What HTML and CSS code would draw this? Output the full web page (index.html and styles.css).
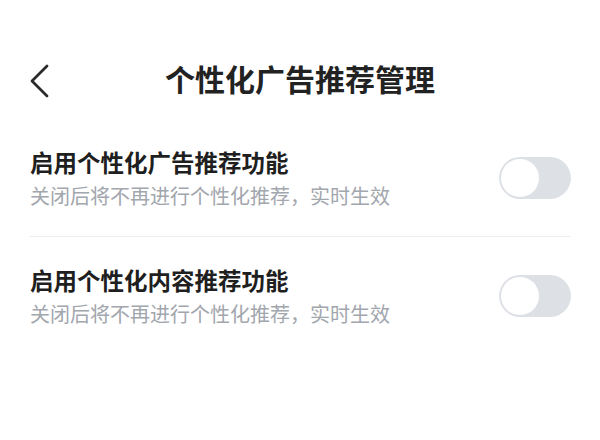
FILE: index.html
```html
<!DOCTYPE html>
<html lang="zh-CN">
<head>
<meta charset="utf-8">
<title>个性化广告推荐管理</title>
<link rel="stylesheet" href="styles.css">
</head>
<body>
<div class="page">
  <header class="nav">
    <button class="back" aria-label="返回">
      <svg width="24" height="34" viewBox="0 0 24 34" fill="none">
        <polyline points="19,2 4,17 19,32" stroke="#2b2b2b" stroke-width="2.8" stroke-linecap="round" stroke-linejoin="round"/>
      </svg>
    </button>
    <h1 class="nav-title">个性化广告推荐管理</h1>
    <span class="nav-spacer"></span>
  </header>
  <ul class="list">
    <li class="row">
      <div class="text">
        <div class="row-title">启用个性化广告推荐功能</div>
        <div class="row-desc">关闭后将不再进行个性化推荐，实时生效</div>
      </div>
      <span class="switch"><span class="knob"></span></span>
    </li>
    <li class="divider"></li>
    <li class="row">
      <div class="text">
        <div class="row-title">启用个性化内容推荐功能</div>
        <div class="row-desc">关闭后将不再进行个性化推荐，实时生效</div>
      </div>
      <span class="switch"><span class="knob"></span></span>
    </li>
  </ul>
</div>
</body>
</html>
```
FILE: styles.css
```css
html, body {
  margin: 0;
  padding: 0;
  background: #ffffff;
}
body {
  font-family: "Noto Sans CJK SC", "Noto Sans", sans-serif;
  color: #1f1f1f;
}
.page {
  width: 600px;
  height: 440px;
  padding-top: 60px;
  box-sizing: border-box;
  overflow: hidden;
}
.nav {
  display: grid;
  grid-template-columns: 1fr auto 1fr;
  align-items: center;
  height: 40px;
  padding: 0 26px;
}
.back {
  justify-self: start;
  display: flex;
  align-items: center;
  padding: 0;
  margin: 0 0 0 2px;
  border: 0;
  background: none;
  width: 24px;
  height: 34px;
  position: relative;
  top: 1px;
}
.nav-title {
  margin: 0;
  font-size: 30px;
  line-height: 40px;
  font-weight: 700;
  color: #222222;
  position: relative;
  top: -2px;
}
.list {
  list-style: none;
  margin: 19px 0 0;
  padding: 0 29px 0 30px;
}
.row {
  display: flex;
  align-items: center;
  justify-content: space-between;
  height: 117px;
}
.text {
  display: flex;
  flex-direction: column;
  gap: 4px;
}
.row-title {
  font-size: 23.5px;
  line-height: 32px;
  font-weight: 700;
  color: #1f1f1f;
}
.row-desc {
  font-size: 20px;
  line-height: 28px;
  color: #a2a6ad;
}
.divider {
  height: 1px;
  background: #ececee;
  margin-right: 1px;
}
.switch {
  display: flex;
  align-items: center;
  width: 72px;
  height: 42px;
  border-radius: 21px;
  background: #dde1e6;
  padding: 2px;
  box-sizing: border-box;
}
.knob {
  width: 38px;
  height: 38px;
  border-radius: 50%;
  background: #ffffff;
}
```
